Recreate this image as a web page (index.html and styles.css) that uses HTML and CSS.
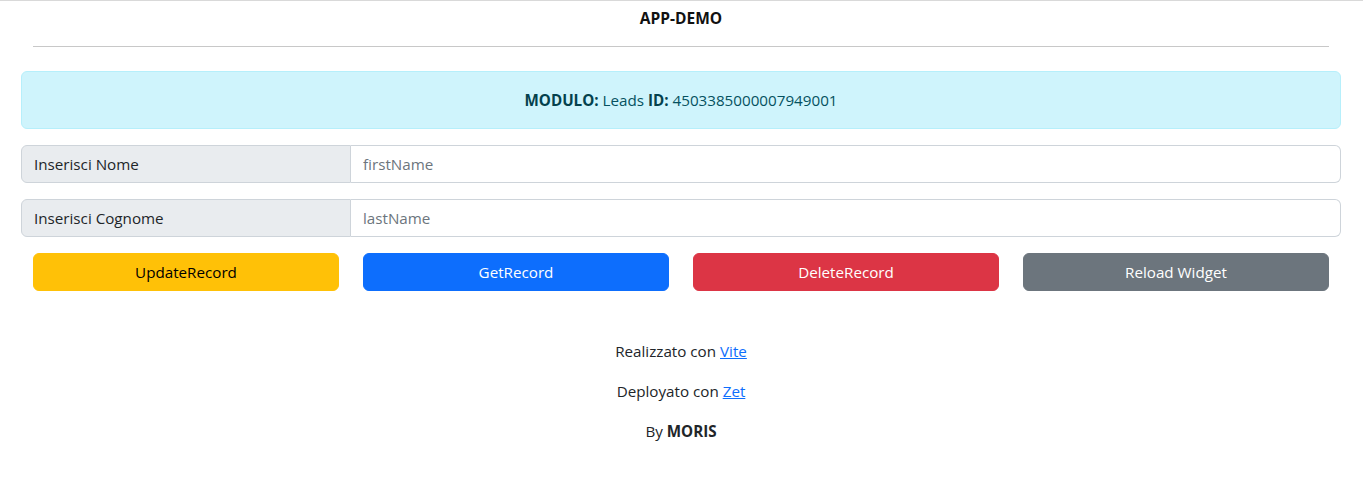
FILE: index.html
```html
<!DOCTYPE html>
<html lang="it">
<head>
<meta charset="utf-8">
<title>APP-DEMO</title>
<link rel="stylesheet" href="styles.css">
</head>
<body>
<div class="page">
  <header class="top">
    <h1 class="title">APP-DEMO</h1>
    <hr class="rule">
  </header>
  <div class="alert"><b>MODULO:</b> Leads <b>ID:</b> 4503385000007949001</div>
  <div class="group">
    <span class="group-label">Inserisci Nome</span>
    <input class="group-input" type="text" placeholder="firstName">
  </div>
  <div class="group">
    <span class="group-label">Inserisci Cognome</span>
    <input class="group-input" type="text" placeholder="lastName">
  </div>
  <div class="buttons">
    <button class="btn btn-warning">UpdateRecord</button>
    <button class="btn btn-primary">GetRecord</button>
    <button class="btn btn-danger">DeleteRecord</button>
    <button class="btn btn-secondary">Reload Widget</button>
  </div>
  <footer class="footer">
    <p>Realizzato con <a href="#">Vite</a></p>
    <p>Deployato con <a href="#">Zet</a></p>
    <p>By <b>MORIS</b></p>
  </footer>
</div>
</body>
</html>
```
FILE: styles.css
```css
* { box-sizing: border-box; }
html, body { margin: 0; padding: 0; }
body {
  font-family: "Open Sans", "Noto Sans", sans-serif;
  font-size: 15.2px;
  line-height: 24px;
  color: #212529;
  background: #fff;
  border-top: 1px solid #d9d9d9;
}
.page {
  padding: 0 22px 0 21px;
}
.top {
  padding: 0 12px;
}
.title {
  margin: 0;
  padding-top: 7px;
  font-size: 15.5px;
  line-height: 20px;
  font-weight: 700;
  text-align: center;
  color: #111;
}
.rule {
  margin: 18px 0 24px;
  border: 0;
  border-top: 1px solid #c8c8c8;
  height: 0;
}
.alert {
  background: #cff4fc;
  border: 1px solid #b6effb;
  color: #055160;
  border-radius: 6px;
  padding: 16px;
  text-align: center;
  margin-bottom: 16px;
}
.alert b { font-weight: 700; color: #04414d; }
.group {
  display: flex;
  height: 38px;
  margin-bottom: 16px;
}
.group-label {
  flex: 0 0 330px;
  background: #e9ecef;
  border: 1px solid #ced4da;
  border-radius: 6px 0 0 6px;
  padding: 6px 12px;
  line-height: 24px;
}
.group-input {
  flex: 1;
  min-width: 0;
  border: 1px solid #ced4da;
  border-left: 0;
  border-radius: 0 6px 6px 0;
  padding: 6px 12px;
  font: inherit;
  color: #212529;
  outline: none;
}
.group-input::placeholder { color: #6c757d; }
.buttons {
  display: grid;
  grid-template-columns: repeat(4, 1fr);
  column-gap: 24px;
  padding: 0 12px;
  margin-top: 1px;
}
.btn {
  height: 38px;
  border: 1px solid transparent;
  border-radius: 6px;
  font: inherit;
  padding: 6px 12px;
  cursor: pointer;
}
.btn-warning { background: #ffc107; border-color: #ffc107; color: #000; }
.btn-primary { background: #0d6efd; border-color: #0d6efd; color: #fff; }
.btn-danger { background: #dc3545; border-color: #dc3545; color: #fff; }
.btn-secondary { background: #6c757d; border-color: #6c757d; color: #fff; }
.footer {
  text-align: center;
  padding-top: 48px;
}
.footer p { margin: 0 0 16px; }
.footer a { color: #0d6efd; text-decoration: underline; }
.footer b { font-weight: 700; }
```
